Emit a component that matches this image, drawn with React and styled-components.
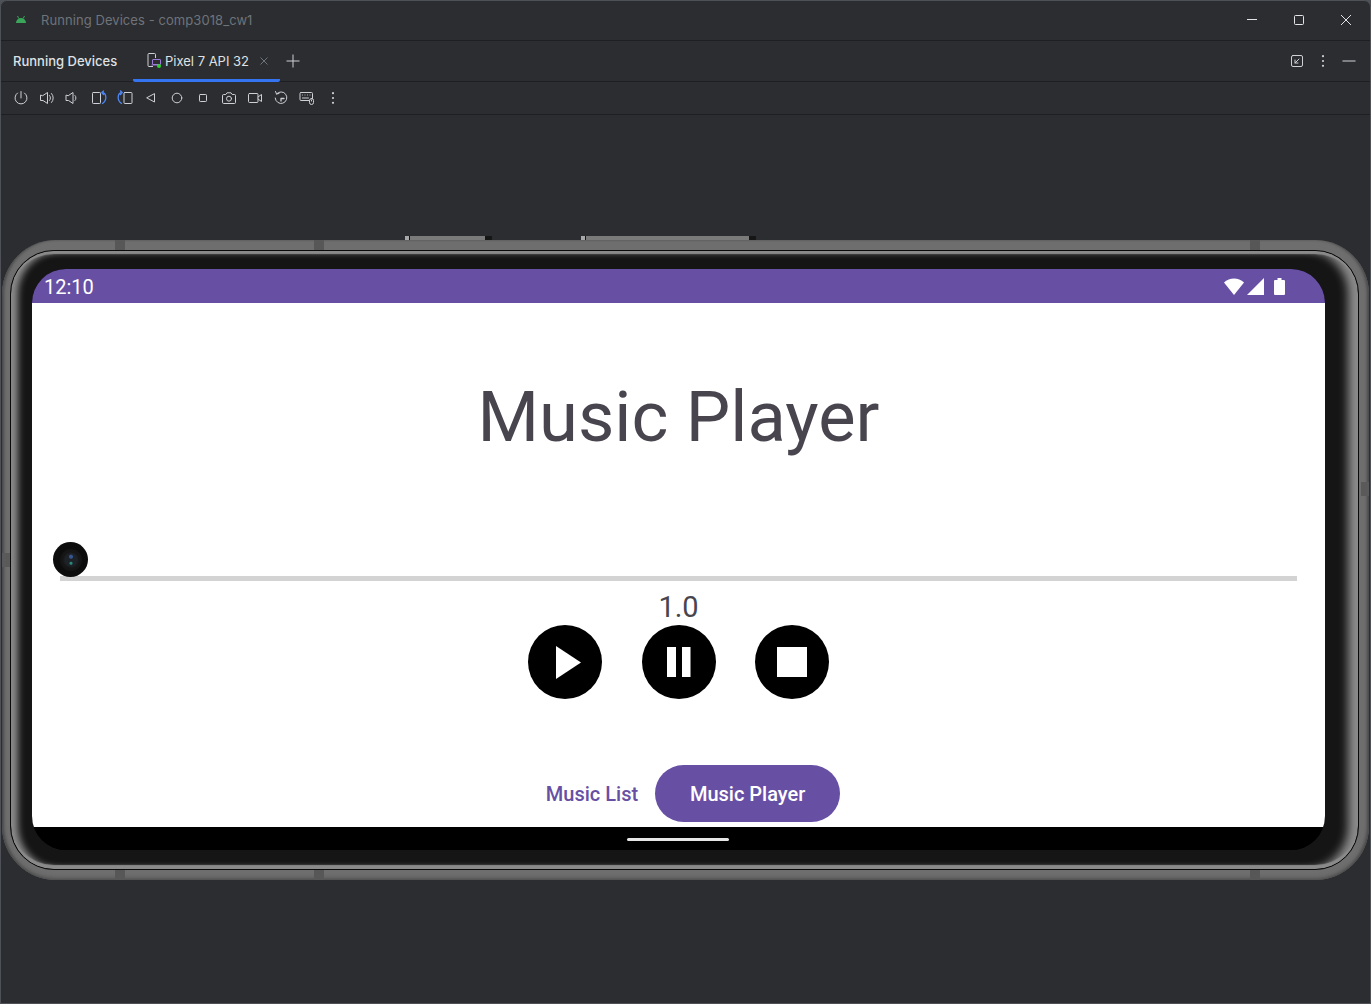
import React from 'react'
import styled, { createGlobalStyle } from 'styled-components'

const GlobalStyle = createGlobalStyle`
  html, body { margin: 0; padding: 0; background: #4e5157; overflow: hidden; }
  * { box-sizing: border-box; }
`

const IDE_ICON = '#ced0d6'
const PURPLE = '#6750a4'
const BLUE = '#4d86f7'

const Svg = ({ size = 16, children }) => (
  <svg width={size} height={size} viewBox="0 0 16 16" fill="none" stroke={IDE_ICON} strokeWidth="1" strokeLinecap="round" strokeLinejoin="round">
    {children}
  </svg>
)

const toolIcons = [
  <><path d="M8 1.500v6.500" /><path d="M4.500 3a6 6 0 1 0 7 0" /></>,
  <><path d="M1.500 5.500v5h2.500L8.500 13.500V2.500L4 5.500z" /><path d="M10.500 5.500a3.500 3.500 0 0 1 0 5" /><path d="M12.500 3.500a6.500 6.500 0 0 1 0 9" /></>,
  <><path d="M1 5.500v5h2.500L8 13.500V2.500L3.500 5.500z" /><path d="M10 5.500a3.500 3.500 0 0 1 0 5" /></>,
  <><rect x="1.500" y="2.500" width="8" height="11" rx=".8" /><path d="M11 2.500c4.500 .5 5.500 7.500 .5 11" stroke={BLUE} strokeWidth="1.300" /><path d="M12.500 1L11 2.500 12.500 4.500" stroke={BLUE} strokeWidth="1.300" /></>,
  <><rect x="7" y="2.500" width="8" height="11" rx=".8" /><path d="M5 2.500c-4.500 .5-5.500 7.500-.5 11" stroke={BLUE} strokeWidth="1.300" /><path d="M3.500 1L5 2.500 3.500 4.500" stroke={BLUE} strokeWidth="1.300" /></>,
  <path d="M11.500 4v8L4 8z" />,
  <circle cx="8" cy="8" r="4.800" />,
  <rect x="4.500" y="4.500" width="7" height="7" rx=".8" />,
  <><path d="M1.500 5.500a1 1 0 0 1 1-1h2.300L6 2.800h4l1.200 1.700h2.300a1 1 0 0 1 1 1v7a1 1 0 0 1-1 1h-11a1 1 0 0 1-1-1z" /><circle cx="8" cy="8.700" r="2.500" /></>,
  <><rect x="1.500" y="3.500" width="9.500" height="9" rx="1" /><path d="M11 7l3.500-2.500v7L11 9" /></>,
  <><path d="M3.500 4A5.800 5.800 0 1 1 2.200 8" /><path d="M2.500 1.500L3.500 4l2.500-.5" /><path d="M8 8.500h3M8 8.500v2.500" strokeWidth="1.300" /></>,
  <><rect x="1" y="2.500" width="12.500" height="8" rx="1" /><path d="M3.500 5h.01M6 5h.01M8.500 5h.01M11 5h.01M3.500 8h6" /><rect x="10.500" y="8.500" width="4" height="6" rx="2" fill="#2b2d30" /><path d="M12.500 10v1" /></>,
  <g fill={IDE_ICON} stroke="none"><circle cx="8" cy="3.200" r="1.100" /><circle cx="8" cy="8" r="1.100" /><circle cx="8" cy="12.800" r="1.100" /></g>,
]

const App = () => (
  <>
    <GlobalStyle />
    <Window>
      <TitleBar>
        <AppTitle>
          <svg width="10" height="7" viewBox="0 0 10 7">
            <path d="M0 7a5 5 0 0 1 10 0z" fill="#3aa65a" />
            <path d="M1.500 0l1.300 2.500M8.500 0L7.200 2.500" stroke="#3aa65a" />
          </svg>
          <TitleText>Running Devices - comp3018_cw1</TitleText>
        </AppTitle>
        <WinControls>
          <WinButton>
            <svg width="12" height="12" viewBox="0 0 12 12"><path d="M1 5.500h10" stroke="#e3e4e7" /></svg>
          </WinButton>
          <WinButton>
            <svg width="12" height="12" viewBox="0 0 12 12"><rect x="1.500" y="1.500" width="9" height="9" rx="1" fill="none" stroke="#e3e4e7" /></svg>
          </WinButton>
          <WinButton>
            <svg width="12" height="12" viewBox="0 0 12 12"><path d="M1 1l10 10M11 1L1 11" stroke="#e3e4e7" /></svg>
          </WinButton>
        </WinControls>
      </TitleBar>

      <TabBar>
        <PanelName>Running Devices</PanelName>
        <Tab>
          <svg width="16" height="16" viewBox="0 0 16 16" fill="none" strokeLinejoin="round">
            <path d="M7 14.500H3a1 1 0 0 1-1-1v-11a1 1 0 0 1 1-1h5.500a1 1 0 0 1 1 1V6" stroke={IDE_ICON} />
            <rect x="6.500" y="7.500" width="8" height="5" rx=".5" stroke="#9d7cd8" />
            <path d="M5.500 13h9" stroke="#9d7cd8" />
            <circle cx="13" cy="14" r="2" fill="#2fd42f" />
          </svg>
          <TabLabel>Pixel 7 API 32</TabLabel>
          <TabClose>
            <svg width="10" height="10" viewBox="0 0 10 10"><path d="M1.500 1.500l7 7M8.500 1.500l-7 7" stroke="#6f737a" /></svg>
          </TabClose>
        </Tab>
        <AddTab>
          <svg width="14" height="14" viewBox="0 0 14 14"><path d="M7 .5v13M.5 7h13" stroke={IDE_ICON} /></svg>
        </AddTab>
        <TabTools>
          <Svg>
            <rect x="2.500" y="2.500" width="11" height="11" rx="1.500" />
            <path d="M10 6L6 10M6 7v3h3" />
          </Svg>
          <Svg>
            <g fill={IDE_ICON} stroke="none"><circle cx="8" cy="3.200" r="1.100" /><circle cx="8" cy="8" r="1.100" /><circle cx="8" cy="12.800" r="1.100" /></g>
          </Svg>
          <Svg>
            <path d="M2 8h12" strokeWidth="1.500" stroke="#9a9ca1" />
          </Svg>
        </TabTools>
      </TabBar>

      <Toolbar>
        {toolIcons.map((icon, i) => (
          <ToolButton key={i}><Svg>{icon}</Svg></ToolButton>
        ))}
      </Toolbar>

      <DeviceArea>
        <Phone>
          <TopKey $left={405} $width={87} />
          <TopKey $left={581} $width={175} />
          {[115, 314, 1250].map((x) => <Band key={'t' + x} $left={x} $edge="top" />)}
          {[115, 314, 1250].map((x) => <Band key={'b' + x} $left={x} $edge="bottom" />)}
          <SideBand $edge="left" $top={313} />
          <SideBand $edge="right" $top={242} />
          <Groove>
            <Bezel>
              <Screen>
                <StatusBar>
                  <Clock>12:10</Clock>
                  <StatusIcons>
                    <svg width="20" height="17" viewBox="0 0 20 17"><path d="M0 4.500C5.500-1 14.500-1 20 4.500L10 17z" fill="#fff" /></svg>
                    <svg width="17" height="17" viewBox="0 0 17 17"><path d="M17 0v17H0z" fill="#fff" /></svg>
                    <Battery>
                      <svg width="11" height="17" viewBox="0 0 11 17"><path d="M3.500 0h4v2H10a1 1 0 0 1 1 1v13a1 1 0 0 1-1 1H1a1 1 0 0 1-1-1V3a1 1 0 0 1 1-1h2.500z" fill="#fff" /></svg>
                    </Battery>
                  </StatusIcons>
                </StatusBar>

                <Content>
                  <Heading>Music Player</Heading>
                  <SeekTrack />
                  <Speed>1.0</Speed>
                  <Controls>
                    <RoundButton>
                      <svg width="74" height="74" viewBox="0 0 74 74"><path d="M28 21v33l25-16.500z" fill="#fff" /></svg>
                    </RoundButton>
                    <RoundButton>
                      <svg width="74" height="74" viewBox="0 0 74 74"><path d="M25 22h9v30h-9zM40 22h8.500v30H40z" fill="#fff" /></svg>
                    </RoundButton>
                    <RoundButton>
                      <svg width="74" height="74" viewBox="0 0 74 74"><rect x="22" y="22" width="30" height="30" fill="#fff" /></svg>
                    </RoundButton>
                  </Controls>
                  <BottomNav>
                    <NavText>Music List</NavText>
                    <NavPill>Music Player</NavPill>
                  </BottomNav>
                </Content>

                <GestureBar><GestureHandle /></GestureBar>
                <Camera><CameraLens /></Camera>
              </Screen>
            </Bezel>
          </Groove>
        </Phone>
      </DeviceArea>
    </Window>
  </>
)

const Window = styled.div`
  width: 1371px;
  height: 1004px;
  background: #2b2d30;
  border: 1px solid #4e5157;
  border-radius: 7px 7px 0 0;
  font-family: Inter, 'Liberation Sans', sans-serif;
  display: flex;
  flex-direction: column;
  overflow: hidden;
`

const TitleBar = styled.div`
  height: 40px;
  flex: none;
  display: flex;
  align-items: center;
  justify-content: space-between;
  border-bottom: 1px solid #1e1f22;
`

const AppTitle = styled.div`
  display: flex;
  align-items: center;
  padding: 0 0 2px 15px;
  gap: 15px;
`

const TitleText = styled.span`
  font-size: 13px;
  letter-spacing: 0.07px;
  color: #6f737a;
`

const WinControls = styled.div`
  display: flex;
  align-items: center;
  padding: 0 1px 2px 0;
`

const WinButton = styled.div`
  width: 47px;
  height: 37px;
  display: flex;
  align-items: center;
  justify-content: center;
`

const TabBar = styled.div`
  height: 41px;
  flex: none;
  display: flex;
  align-items: stretch;
  border-bottom: 1px solid #1e1f22;
`

const PanelName = styled.div`
  display: flex;
  align-items: center;
  padding-left: 12px;
  font-size: 13px;
  font-weight: 500;
  color: #dfe1e5;
  width: 132px;
  white-space: nowrap;
`

const Tab = styled.div`
  width: 147px;
  display: flex;
  align-items: center;
  padding-left: 13px;
  margin-bottom: -1px;
  border-bottom: 3px solid #3574f0;
  border-radius: 0 0 2px 2px;
  gap: 3px;
`

const TabLabel = styled.span`
  font-size: 13px;
  color: #dfe1e5;
  padding-top: 2px;
`

const TabClose = styled.span`
  display: flex;
  margin: 2px 0 0 7px;
`

const AddTab = styled.div`
  display: flex;
  align-items: center;
  margin-left: 6px;
`

const TabTools = styled.div`
  margin-left: auto;
  display: flex;
  align-items: center;
  gap: 10px;
  padding-right: 13px;
`

const Toolbar = styled.div`
  height: 33px;
  flex: none;
  display: flex;
  align-items: center;
  padding-left: 7px;
  border-bottom: 1px solid #1e1f22;
`

const ToolButton = styled.div`
  width: 26px;
  height: 26px;
  display: flex;
  align-items: center;
  justify-content: center;
`

const DeviceArea = styled.div`
  flex: 1;
  padding: 125px 1px 0;
`

const Phone = styled.div`
  position: relative;
  width: 1367px;
  height: 640px;
  border-radius: 54px;
  padding: 10px 10px 10px 8px;
  background: #6e6e6e;
  box-shadow:
    inset 3px 0 3px -1px #4a4a4a,
    inset -3px 0 3px -1px #4a4a4a,
    inset 0 -4px 4px -2px #555;
`

const TopKey = styled.div`
  position: absolute;
  top: -4px;
  left: ${(p) => p.$left - 2}px;
  width: ${(p) => p.$width}px;
  height: 4px;
  background: linear-gradient(90deg, #a8a8a8 0 4px, #151515 4px 5px, #7a7a7a 5px calc(100% - 7px), #161616 calc(100% - 7px));
`

const Band = styled.div`
  position: absolute;
  ${(p) => p.$edge}: 0;
  left: ${(p) => p.$left - 2}px;
  width: 10px;
  height: 10px;
  background: #575757;
`

const SideBand = styled.div`
  position: absolute;
  ${(p) => p.$edge}: 0;
  top: ${(p) => p.$top}px;
  width: 8px;
  height: 14px;
  background: #5a5a5a;
`

const Groove = styled.div`
  height: 100%;
  border-radius: 44px;
  border: 1px solid #0a0a0a;
  overflow: hidden;
  background: #151515;
`

const Bezel = styled.div`
  height: 100%;
  padding: 18px 33px 13px 21px;
  border-radius: 43px;
  background: #151515;
  box-shadow:
    inset 0 4px 1px -1px #8a8a8a,
    inset 0 -5px 1px -1px #8a8a8a,
    inset 7px 0 7px 0 #8c8c8c,
    inset -12px 0 10px -2px #8c8c8c;
`

const Screen = styled.div`
  position: relative;
  width: 1293px;
  height: 581px;
  border-radius: 34px;
  background: #000;
  overflow: hidden;
  display: flex;
  flex-direction: column;
  font-family: Roboto, sans-serif;
`

const StatusBar = styled.div`
  height: 34px;
  flex: none;
  background: ${PURPLE};
  display: flex;
  align-items: center;
  justify-content: space-between;
  padding: 0 40px 0 12px;
`

const Clock = styled.span`
  color: #fff;
  font-size: 20px;
  padding-top: 2px;
`

const StatusIcons = styled.div`
  display: flex;
  align-items: center;
  gap: 3px;
`

const Battery = styled.span`
  display: flex;
  margin-left: 7px;
`

const Content = styled.div`
  height: 524px;
  flex: none;
  background: #fff;
  display: flex;
  flex-direction: column;
  align-items: center;
  padding-top: 72px;
`

const Heading = styled.h1`
  margin: 0;
  font-size: 70.5px;
  line-height: 84px;
  font-weight: 400;
  color: #49454f;
`

const SeekTrack = styled.div`
  width: 1237px;
  height: 5px;
  margin-top: 117px;
  background: #d3d3d3;
`

const Speed = styled.div`
  margin-top: 9px;
  font-size: 29px;
  line-height: 35px;
  color: #49454f;
`

const Controls = styled.div`
  display: flex;
  gap: 39.500px;
  margin-left: 0.2px;
`

const RoundButton = styled.div`
  width: 74px;
  height: 74px;
  border-radius: 50%;
  background: #000;
`

const BottomNav = styled.div`
  display: flex;
  align-items: center;
  margin-top: 66px;
  gap: 17px;
  margin-left: 29px;
`

const NavText = styled.span`
  font-size: 20px;
  font-weight: 500;
  color: ${PURPLE};
`

const NavPill = styled.div`
  width: 185px;
  height: 57px;
  border-radius: 29px;
  background: ${PURPLE};
  color: #fff;
  font-size: 20px;
  font-weight: 500;
  display: flex;
  align-items: center;
  justify-content: center;
`

const GestureBar = styled.div`
  height: 23px;
  flex: none;
  background: #000;
  display: flex;
  align-items: center;
  justify-content: center;
  padding: 2px 1px 0 0;
`

const GestureHandle = styled.div`
  width: 102px;
  height: 3px;
  border-radius: 2px;
  background: #e6e6e6;
`

const Camera = styled.div`
  position: absolute;
  left: 21px;
  top: 273px;
  width: 35px;
  height: 35px;
  border-radius: 50%;
  background: #0c0c0c;
  display: flex;
  align-items: center;
  justify-content: center;
`

const CameraLens = styled.div`
  width: 22px;
  height: 22px;
  border-radius: 50%;
  background:
    radial-gradient(circle at 50% 35%, #35558f 0 1.500px, transparent 2.500px),
    radial-gradient(circle at 50% 65%, #2a8a76 0 1px, transparent 2px),
    radial-gradient(circle, #1d2228 0 6px, #161616 8px, #141414 11px);
`

export default App
